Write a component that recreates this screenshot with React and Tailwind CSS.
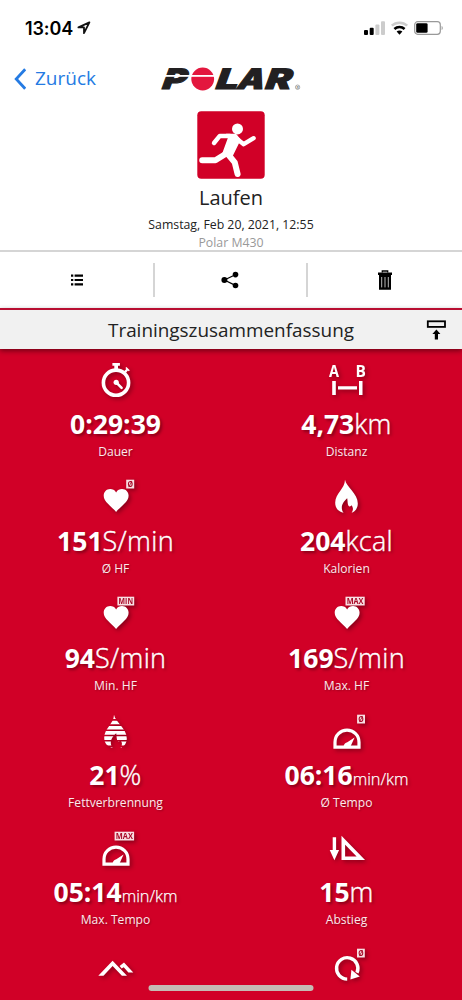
function Badge({ x, width, text }) {
  return (
    <g>
      <rect x={x} y="6.7" width={width} height="8.8" fill="#f9dfe3" />
      <text
        x={x + width / 2}
        y="14.1"
        textAnchor="middle"
        textLength={width - 2.4}
        lengthAdjust="spacingAndGlyphs"
        fontSize="8.4"
        fontWeight="700"
        fill="#a80a28"
      >
        {text}
      </text>
    </g>
  );
}

function StatIcon({ children }) {
  return (
    <svg
      className="h-11 w-12 shrink-0 overflow-visible drop-shadow-[2px_2px_2px_rgba(0,0,0,0.35)]"
      viewBox="0 0 48 44"
      fill="white"
    >
      {children}
    </svg>
  );
}

const flame =
  "M22 6.8C23.2 14 34.8 20.5 34.8 30.5C34.8 35 32.3 38.6 28.6 39.8C30.6 36.8 30.2 34.3 28.6 32.2C28 33.2 27 33.7 26.1 33.2C24.4 32 24.8 28.5 24.2 25.2C22 27 19 30.5 18.8 34C18.7 36.3 19.4 38.4 20.6 39.8C15.5 38.8 12.2 35 12.2 29.7C12.2 20.5 21.8 16 22 6.8Z";

function Heart() {
  return (
    <path d="M24.1 19.4C25.5 17 27.7 16.1 30 16.1C33.8 16.1 36.6 19 36.6 22.8C36.6 29 29.2 32.8 24.1 38.9C19 32.8 11.7 29 11.7 22.8C11.7 19 14.4 16.1 18.2 16.1C20.5 16.1 22.8 17 24.1 19.4Z" />
  );
}

function Gauge() {
  return (
    <g>
      <path
        d="M12 39.1V34.2C12 27.3 17.3 22.2 24 22.2S36 27.3 36 34.2V39.1Z"
        fill="none"
        stroke="white"
        strokeWidth="3.2"
      />
      <path d="M31.6 29.4L27.5 38.6H20.5C21 35.8 22.6 34.8 24.3 34.3Z" />
    </g>
  );
}

const icons = {
  stopwatch: (
    <>
      <circle cx="24" cy="26.7" r="12.6" fill="none" stroke="white" strokeWidth="3.6" />
      <path d="M20.4 6.9H27.9V9.8H26V14H22.3V9.8H20.4Z" />
      <path d="M31.8 15.6L34.3 13L33.4 12.1L34.4 11L37.8 14.2L36.8 15.3L35.9 14.6L33.8 17Z" />
      <circle cx="24.2" cy="26.3" r="2.6" />
      <path d="M24.2 26.3L29.6 31.8" stroke="white" strokeWidth="2.6" strokeLinecap="round" />
    </>
  ),
  distance: (
    <>
      <text x="5.9" y="21.2" fontSize="16.4" fontWeight="700" textLength="10" lengthAdjust="spacingAndGlyphs">A</text>
      <text x="32.4" y="21.2" fontSize="16.4" fontWeight="700" textLength="10.4" lengthAdjust="spacingAndGlyphs">B</text>
      <path d="M9.2 25H12.8V39H9.2ZM15 30.3H34V33.5H15ZM36 25H39.5V39H36Z" />
    </>
  ),
  heartAvg: (
    <>
      <Heart />
      <Badge x={34.2} width={8} text="Ø" />
    </>
  ),
  flame: <path d={flame} />,
  heartMin: (
    <>
      <Heart />
      <Badge x={25.4} width={16.8} text="MIN" />
    </>
  ),
  heartMax: (
    <>
      <Heart />
      <Badge x={22.5} width={19.2} text="MAX" />
    </>
  ),
  fatBurn: (
    <>
      <clipPath id="stripes">
        <path d="M0 5H48V11H0ZM0 12.7H48V16.3H0ZM0 17.9H48V21.5H0ZM0 23.1H48V26.8H0ZM0 28.3H48V32H0ZM0 33.6H48V37.4H0ZM0 39H48V41H0Z" />
      </clipPath>
      <path d={flame} clipPath="url(#stripes)" />
    </>
  ),
  paceAvg: (
    <>
      <Gauge />
      <Badge x={34.1} width={7.9} text="Ø" />
    </>
  ),
  paceMax: (
    <>
      <Gauge />
      <Badge x={22.6} width={19.5} text="MAX" />
    </>
  ),
  descent: (
    <>
      <path d="M9.7 12.2H13.1V25H16.1L11.4 35.3L6.7 25H9.7Z" />
      <path d="M20.3 15.2L37.8 33.3H20.3Z" fill="none" stroke="white" strokeWidth="3.6" />
    </>
  ),
  altitude: (
    <>
      <path d="M6.3 33.7L20.6 18.7L35 33.7H29.9L20.6 24.1L11.5 33.7Z" />
      <path d="M27.6 23.9L32 20.4L41.3 30.4H36.4L31.7 25.3L29.7 26.6Z" />
    </>
  ),
  laps: (
    <>
      <path d="M24.2 37.1A10.7 10.7 0 1 1 34 30.8" fill="none" stroke="white" strokeWidth="3.4" />
      <path d="M28.4 27.8L36.8 34.6L27.4 37.6Z" />
      <Badge x={34} width={7.8} text="Ø" />
    </>
  ),
};

const stats = [
  { icon: "stopwatch", value: "0:29:39", label: "Dauer" },
  { icon: "distance", value: "4,73", unit: "km", label: "Distanz" },
  { icon: "heartAvg", value: "151", unit: "S/min", label: "Ø HF" },
  { icon: "flame", value: "204", unit: "kcal", label: "Kalorien" },
  { icon: "heartMin", value: "94", unit: "S/min", label: "Min. HF" },
  { icon: "heartMax", value: "169", unit: "S/min", label: "Max. HF" },
  { icon: "fatBurn", value: "21", unit: "%", label: "Fettverbrennung" },
  { icon: "paceAvg", value: "06:16", unit: "min/km", small: true, label: "Ø Tempo" },
  { icon: "paceMax", value: "05:14", unit: "min/km", small: true, label: "Max. Tempo" },
  { icon: "descent", value: "15", unit: "m", label: "Abstieg" },
  { icon: "altitude" },
  { icon: "laps" },
];

function Stat({ icon, value, unit, small, label }) {
  return (
    <div className="flex h-[117.2px] flex-col items-center text-white">
      <StatIcon>{icons[icon]}</StatIcon>
      {value && (
        <>
          <div className="mt-[5.5px] h-9 text-[26.5px] leading-9 whitespace-nowrap [text-shadow:2px_2px_3px_rgba(0,0,0,0.35)]">
            <span className="font-bold">{value}</span>
            <span
              className={
                small
                  ? "text-[16.4px] font-light [-webkit-text-stroke:0.25px_white]"
                  : "text-[27px] font-light tracking-[0.3px] [-webkit-text-stroke:0.4px_white]"
              }
            >
              {unit}
            </span>
          </div>
          <div className="text-[12.1px] leading-[19px] text-[#fce9ec] [text-shadow:1px_1px_2px_rgba(0,0,0,0.3)]">{label}</div>
        </>
      )}
    </div>
  );
}

function StatusBar() {
  return (
    <div className="flex h-14 items-center justify-between pr-[19px] pl-[25px]">
      <div className="flex items-center gap-1 font-[Inter,sans-serif] text-[18px] font-semibold text-black">
        <span className="tracking-[-0.1px]">13:04</span>
        <svg className="h-3.5 w-3.5" viewBox="0 0 14 14" fill="none" stroke="#111" strokeWidth="1.8" strokeLinejoin="round">
          <path d="M12.4 1.4L1.4 6.4H7V12.2Z" />
        </svg>
      </div>
      <div className="flex items-center gap-[6px]">
        <svg className="h-[14px] w-[21px]" viewBox="0 0 21 14">
          <rect x="0" y="9" width="4" height="5" rx="1" />
          <rect x="5.7" y="6.8" width="4" height="7.2" rx="1" />
          <rect x="11.4" y="3.6" width="4" height="10.4" rx="1" fill="#ccc" />
          <rect x="17" y="0.3" width="4" height="13.7" rx="1" fill="#ccc" />
        </svg>
        <svg className="h-[14px] w-[17px] overflow-visible" viewBox="0 0 17 14" fill="none" strokeWidth="2.5">
          <path d="M0.8 4.7C5.1 0.6 11.9 0.6 16.2 4.7" stroke="#ccc" />
          <path d="M3.4 8C6.3 5.2 10.7 5.2 13.6 8" stroke="black" />
          <path d="M5.6 10.6C7.2 9.1 9.8 9.1 11.4 10.6L8.5 13.8Z" fill="black" />
        </svg>
        <svg className="h-[14px] w-[29px]" viewBox="0 0 29 14">
          <rect x="0.7" y="0.7" width="25.6" height="12.6" rx="3" fill="none" stroke="#999" strokeWidth="1.2" />
          <rect x="2.2" y="2.2" width="11.4" height="9.6" rx="1.4" />
          <path d="M27.6 5C29.1 5.5 29.1 8.5 27.6 9Z" fill="#999" />
        </svg>
      </div>
    </div>
  );
}

function PolarLogo() {
  return (
    <svg className="h-10 w-[142px] overflow-visible" viewBox="0 -7 142 40" fontFamily="Inter, sans-serif" fontWeight="900">
      <g fill="#222021" stroke="#222021" strokeWidth="1" fontSize="28" transform="translate(6 0) skewX(-20)">
        <text x="2.8" y="23.2" textLength="24" lengthAdjust="spacingAndGlyphs">P</text>
        <text x="56.2" y="23.2" textLength="22.5" lengthAdjust="spacingAndGlyphs">L</text>
        <text x="78" y="23.2" textLength="27" lengthAdjust="spacingAndGlyphs">A</text>
        <text x="105.6" y="23.2" textLength="26" lengthAdjust="spacingAndGlyphs">R</text>
      </g>
      <circle cx="42.7" cy="13" r="11.4" fill="#e3173e" />
      <rect x="0" y="9" width="57" height="1.8" fill="white" />
      <circle cx="137.6" cy="21.2" r="2.2" fill="none" stroke="#777" strokeWidth="0.6" />
      <text x="137.6" y="22.6" textAnchor="middle" fontSize="3.6" fontWeight="600" fill="#777">R</text>
    </svg>
  );
}

export default function App() {
  return (
    <div className="flex h-screen flex-col overflow-hidden bg-white font-['Open_Sans',sans-serif]">
      <StatusBar />
      <header className="grid h-[45px] grid-cols-[1fr_142px_1fr] items-center">
        <button className="flex items-center gap-[9px] pl-[14px] text-left text-[19px] text-[#257be3]">
          <svg className="h-[22px] w-3" viewBox="0 0 12 22" fill="none" stroke="currentColor" strokeWidth="2.8">
            <path d="M11.2 1.2L2.2 11L11.2 20.8" />
          </svg>
          <span>Zurück</span>
        </button>
        <PolarLogo />
      </header>

      <section className="flex h-[151px] flex-col items-center border-b-2 border-[#d5d5d5] pt-[10px]">
        <svg className="h-[68px] w-[68px] shrink-0" viewBox="0 0 68 68">
          <rect x="0.3" y="0.3" width="67.4" height="67.4" rx="4" fill="#d10027" />
          <circle cx="40.5" cy="17.9" r="5.5" fill="white" />
          <g fill="none" stroke="white" strokeLinecap="round" strokeLinejoin="round">
            <path d="M33 25L22.8 24.9L17 32" strokeWidth="4.4" />
            <path d="M37.5 26L46.7 33.2L56.6 27.2" strokeWidth="4.4" />
            <path d="M28.5 43L18.4 49.3H5.2" strokeWidth="6" />
            <path d="M30 42L37.7 51.3L40.6 63" strokeWidth="6" />
          </g>
          <path d="M29 22.8H39L43.8 28.5L35.4 45.8L25 43L31.2 26Z" fill="white" />
        </svg>
        <h1 className="mt-[5px] text-[20px] leading-7 text-[#222]">Laufen</h1>
        <p className="mt-[3px] text-[12.3px] leading-[19px] text-[#222]">Samstag, Feb 20, 2021, 12:55</p>
        <p className="text-[12.3px] leading-[17px] text-[#999]">Polar M430</p>
      </section>

      <nav className="grid h-14 shrink-0 grid-cols-3 items-center pl-px">
        <button className="flex h-[34px] items-center justify-center border-r-2 border-[#d5d5d5]">
          <svg className="h-3 w-3" viewBox="0 0 12 12">
            <path d="M0 .5H2.3V2.7H0ZM3.6 .5H12V2.7H3.6ZM0 4.9H2.3V7.1H0ZM3.6 4.9H12V7.1H3.6ZM0 9.3H2.3V11.5H0ZM3.6 9.3H12V11.5H3.6Z" />
          </svg>
        </button>
        <button className="flex h-[34px] items-center justify-center border-r-2 border-[#d5d5d5]">
          <svg className="h-[18px] w-[18px]" viewBox="0 0 18 18">
            <path d="M14.8 3.5L3.4 9L14.8 14.6" fill="none" stroke="black" strokeWidth="1.2" />
            <circle cx="3.4" cy="9.1" r="3" />
            <circle cx="14.5" cy="3.6" r="2.8" />
            <circle cx="14.5" cy="14.5" r="2.8" />
          </svg>
        </button>
        <button className="flex h-[34px] items-center justify-center">
          <svg className="h-5 w-[14px]" viewBox="0 0 14 20">
            <path d="M4.3 2.6V1H9.7V2.6" fill="none" stroke="black" strokeWidth="1.3" />
            <path d="M0 2.4H14V5H0ZM1 5H13V19.7H1Z" />
            <path d="M3.7 7V17.4M7 7V17.4M10.3 7V17.4" stroke="#bbb" strokeWidth="1" />
          </svg>
        </button>
      </nav>

      <div className="z-10 grid h-[41px] shrink-0 grid-cols-[1fr_auto_1fr] items-center border-t-2 border-[#b80e31] bg-[#f1f1f1] shadow-[0_2px_5px_rgba(0,0,0,0.45)]">
        <h2 className="col-start-2 pt-px text-[18.9px] text-[#222]">Trainingszusammenfassung</h2>
        <svg className="mr-[16px] h-5 w-5 justify-self-end" viewBox="0 0 20 20">
          <rect x="1.8" y="1.3" width="17.2" height="5.6" fill="none" stroke="black" strokeWidth="1.8" />
          <path d="M10.4 9.6L14.4 14H12V19.5H8.8V14H6.4Z" />
        </svg>
      </div>

      <main className="relative grid flex-1 grid-cols-2 content-start overflow-hidden bg-[#d10027] pt-[7px]">
        {stats.map((stat) => (
          <Stat key={stat.icon} {...stat} />
        ))}
        <div className="absolute bottom-[9px] left-1/2 h-[6px] w-[165px] -translate-x-1/2 rounded-full bg-[#c5bbb4]" />
      </main>
    </div>
  );
}
